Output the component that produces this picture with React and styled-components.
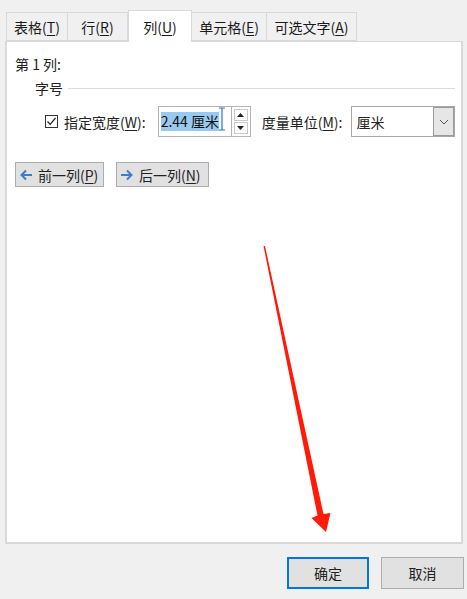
import React from "react";
import styled, { createGlobalStyle } from "styled-components";

const Global = createGlobalStyle`
  html, body { margin: 0; padding: 0; background: #f0f0f0; }
  body { font-family: "Noto Sans CJK SC", "Microsoft YaHei", sans-serif; font-size: 14px; color: #000; }
`;

const Dialog = styled.div`
  position: relative;
  width: 467px;
  height: 599px;
  box-sizing: border-box;
  background: #f0f0f0;
  display: flex;
  flex-direction: column;
  padding: 10px 0 0 5px;
`;

const TabStrip = styled.div`
  display: flex;
  align-items: flex-end;
  height: 31px;
  margin-left: 1px;
  position: relative;
  z-index: 1;
`;

const Tab = styled.div`
  box-sizing: border-box;
  width: ${p => p.w}px;
  height: ${p => (p.active ? 32 : 29)}px;
  margin-bottom: ${p => (p.active ? -1 : 0)}px;
  display: flex;
  align-items: center;
  justify-content: center;
  white-space: nowrap;
  padding-top: ${p => (p.active ? 0 : 1)}px;
  background: ${p => (p.active ? "#fff" : "#f0f0f0")};
  border: 1px solid #d9d9d9;
  border-bottom: ${p => (p.active ? "none" : "1px solid #d9d9d9")};
  border-left: ${p => (p.first || p.active ? "1px solid #d9d9d9" : "none")};
  font-size: 14px;
  color: #1a1a1a;
`;

const U = styled.span`
  text-decoration: underline;
  text-underline-offset: 2px;
`;

const Panel = styled.div`
  box-sizing: border-box;
  width: 458px;
  height: 503px;
  background: #fff;
  border: 1px solid #d9d9d9;
  border-width: 1px 2px 2px 2px;
  padding: 13px 4px 0 8px;
  display: flex;
  flex-direction: column;
`;

const Heading = styled.div`
  font-size: 14px;
  line-height: 18px;
  color: #222;
`;

const GroupHead = styled.div`
  display: flex;
  align-items: center;
  margin: 6px 0 0 20px;
  gap: 5px;
  font-size: 14px;
  line-height: 18px;
  color: #222;
`;

const Rule = styled.div`
  flex: 1;
  height: 1px;
  background: #dcdcdc;
  margin-right: 2px;
`;

const FieldRow = styled.div`
  display: flex;
  align-items: center;
  margin: 9px 0 0 30px;
  height: 31px;
  white-space: nowrap;
  & > * { flex-shrink: 0; }
`;

const Check = styled.div`
  width: 13px;
  height: 13px;
  box-sizing: border-box;
  border: 1px solid #333;
  display: flex;
  align-items: center;
  justify-content: center;
  margin-right: 6px;
`;

const Label = styled.span`
  font-size: 14px;
  color: #222;
  white-space: nowrap;
  margin-right: ${p => p.mr || 0}px;
`;

const InputBox = styled.div`
  position: relative;
  box-sizing: border-box;
  width: 74px;
  height: 31px;
  border: 1px solid #b4b4b4;
  display: flex;
  align-items: center;
  padding-left: 2px;
`;

const Selected = styled.span`
  background: #99c9ef;
  font-size: 14px;
  line-height: 19px;
  color: #111;
`;

const Spinner = styled.div`
  box-sizing: border-box;
  width: 19px;
  height: 31px;
  border: 1px solid #b4b4b4;
  border-left: none;
  display: flex;
  flex-direction: column;
  padding: 2px;
  gap: 1px;
  margin-right: 11px;
`;

const SpinBtn = styled.div`
  flex: 1;
  border: 1px solid #c8c8c8;
  display: flex;
  align-items: center;
  justify-content: center;
`;

const Select = styled.div`
  box-sizing: border-box;
  width: 104px;
  height: 31px;
  border: 1px solid #a8a8a8;
  display: flex;
  align-items: stretch;
  margin-left: 9px;
`;

const SelectValue = styled.div`
  flex: 1;
  display: flex;
  align-items: center;
  padding-left: 4px;
  font-size: 14px;
  color: #222;
`;

const SelectBtn = styled.div`
  width: 21px;
  box-sizing: border-box;
  background: #e6e6e6;
  border: 1px solid #9a9a9a;
  display: flex;
  align-items: center;
  justify-content: center;
`;

const NavRow = styled.div`
  display: flex;
  gap: 12px;
  margin-top: 25px;
`;

const NavBtn = styled.div`
  box-sizing: border-box;
  width: ${p => p.w}px;
  height: 25px;
  padding: 0 0 0 3px;
  background: #e1e1e1;
  border: 1px solid #adadad;
  display: flex;
  align-items: center;
  gap: 5px;
  white-space: nowrap;
  font-size: 14px;
  color: #222;
`;

const Footer = styled.div`
  display: flex;
  justify-content: flex-end;
  gap: 12px;
  margin-top: 13px;
  padding-right: 3px;
`;

const DlgBtn = styled.div`
  box-sizing: border-box;
  width: ${p => p.w}px;
  height: 32px;
  background: #e1e1e1;
  border: ${p => (p.primary ? "2px solid #0078d7" : "1px solid #adadad")};
  display: flex;
  align-items: center;
  justify-content: center;
  font-size: 14px;
  color: #222;
`;

const Annotation = styled.svg`
  position: absolute;
  left: 0;
  top: 0;
  pointer-events: none;
`;

const Cursor = styled.svg`
  position: absolute;
  left: 59px;
  top: 0px;
`;

const ArrowIcon = ({ dir }) => (
  <svg width="14" height="12" viewBox="0 0 14 12">
    {dir === "left" ? (
      <path d="M13 6H2.5M7 1.5L2.5 6L7 10.5" stroke="#3d7cc9" strokeWidth="2" fill="none" />
    ) : (
      <path d="M1 6h10.5M7 1.5L11.5 6L7 10.5" stroke="#3d7cc9" strokeWidth="2" fill="none" />
    )}
  </svg>
);

export default function App() {
  return (
    <>
      <Global />
      <Dialog>
        <TabStrip>
          <Tab w={62} first>表格(<U>T</U>)</Tab>
          <Tab w={60}>行(<U>R</U>)</Tab>
          <Tab w={64} active>列(<U>U</U>)</Tab>
          <Tab w={75}>单元格(<U>E</U>)</Tab>
          <Tab w={90}>可选文字(<U>A</U>)</Tab>
        </TabStrip>
        <Panel>
          <Heading>第 1 列:</Heading>
          <GroupHead>
            字号
            <Rule />
          </GroupHead>
          <FieldRow>
            <Check>
              <svg width="11" height="11" viewBox="0 0 11 11">
                <path d="M1.5 5.5L4.2 8.3L9.5 2" stroke="#222" strokeWidth="1.2" fill="none" />
              </svg>
            </Check>
            <Label mr={12}>指定宽度(<U>W</U>):</Label>
            <InputBox>
              <Selected>2.44 厘米</Selected>
              <Cursor width="8" height="24" viewBox="0 0 8 24">
                <path d="M1 1h6M4 1v22M1 23h6" stroke="#1e78d2" strokeWidth="1.2" fill="none" />
              </Cursor>
            </InputBox>
            <Spinner>
              <SpinBtn>
                <svg width="7" height="4" viewBox="0 0 7 4"><path d="M0 4L3.5 0L7 4Z" fill="#222" /></svg>
              </SpinBtn>
              <SpinBtn>
                <svg width="7" height="4" viewBox="0 0 7 4"><path d="M0 0L3.5 4L7 0Z" fill="#222" /></svg>
              </SpinBtn>
            </Spinner>
            <Label>度量单位(<U>M</U>):</Label>
            <Select>
              <SelectValue>厘米</SelectValue>
              <SelectBtn>
                <svg width="10" height="6" viewBox="0 0 10 6">
                  <path d="M1 1L5 5L9 1" stroke="#555" strokeWidth="1" fill="none" />
                </svg>
              </SelectBtn>
            </Select>
          </FieldRow>
          <NavRow>
            <NavBtn w={89}>
              <ArrowIcon dir="left" />
              <span>前一列(<U>P</U>)</span>
            </NavBtn>
            <NavBtn w={93}>
              <ArrowIcon dir="right" />
              <span>后一列(<U>N</U>)</span>
            </NavBtn>
          </NavRow>
        </Panel>
        <Footer>
          <DlgBtn w={82} primary>确定</DlgBtn>
          <DlgBtn w={83}>取消</DlgBtn>
        </Footer>
        <Annotation width="467" height="599" viewBox="0 0 467 599">
          <path d="M263.5 246 L265 246 L323.5 514 L330.5 513 L326 532 L311.5 518 L317.5 515.5 Z" fill="#ff1a0a" />
        </Annotation>
      </Dialog>
    </>
  );
}
